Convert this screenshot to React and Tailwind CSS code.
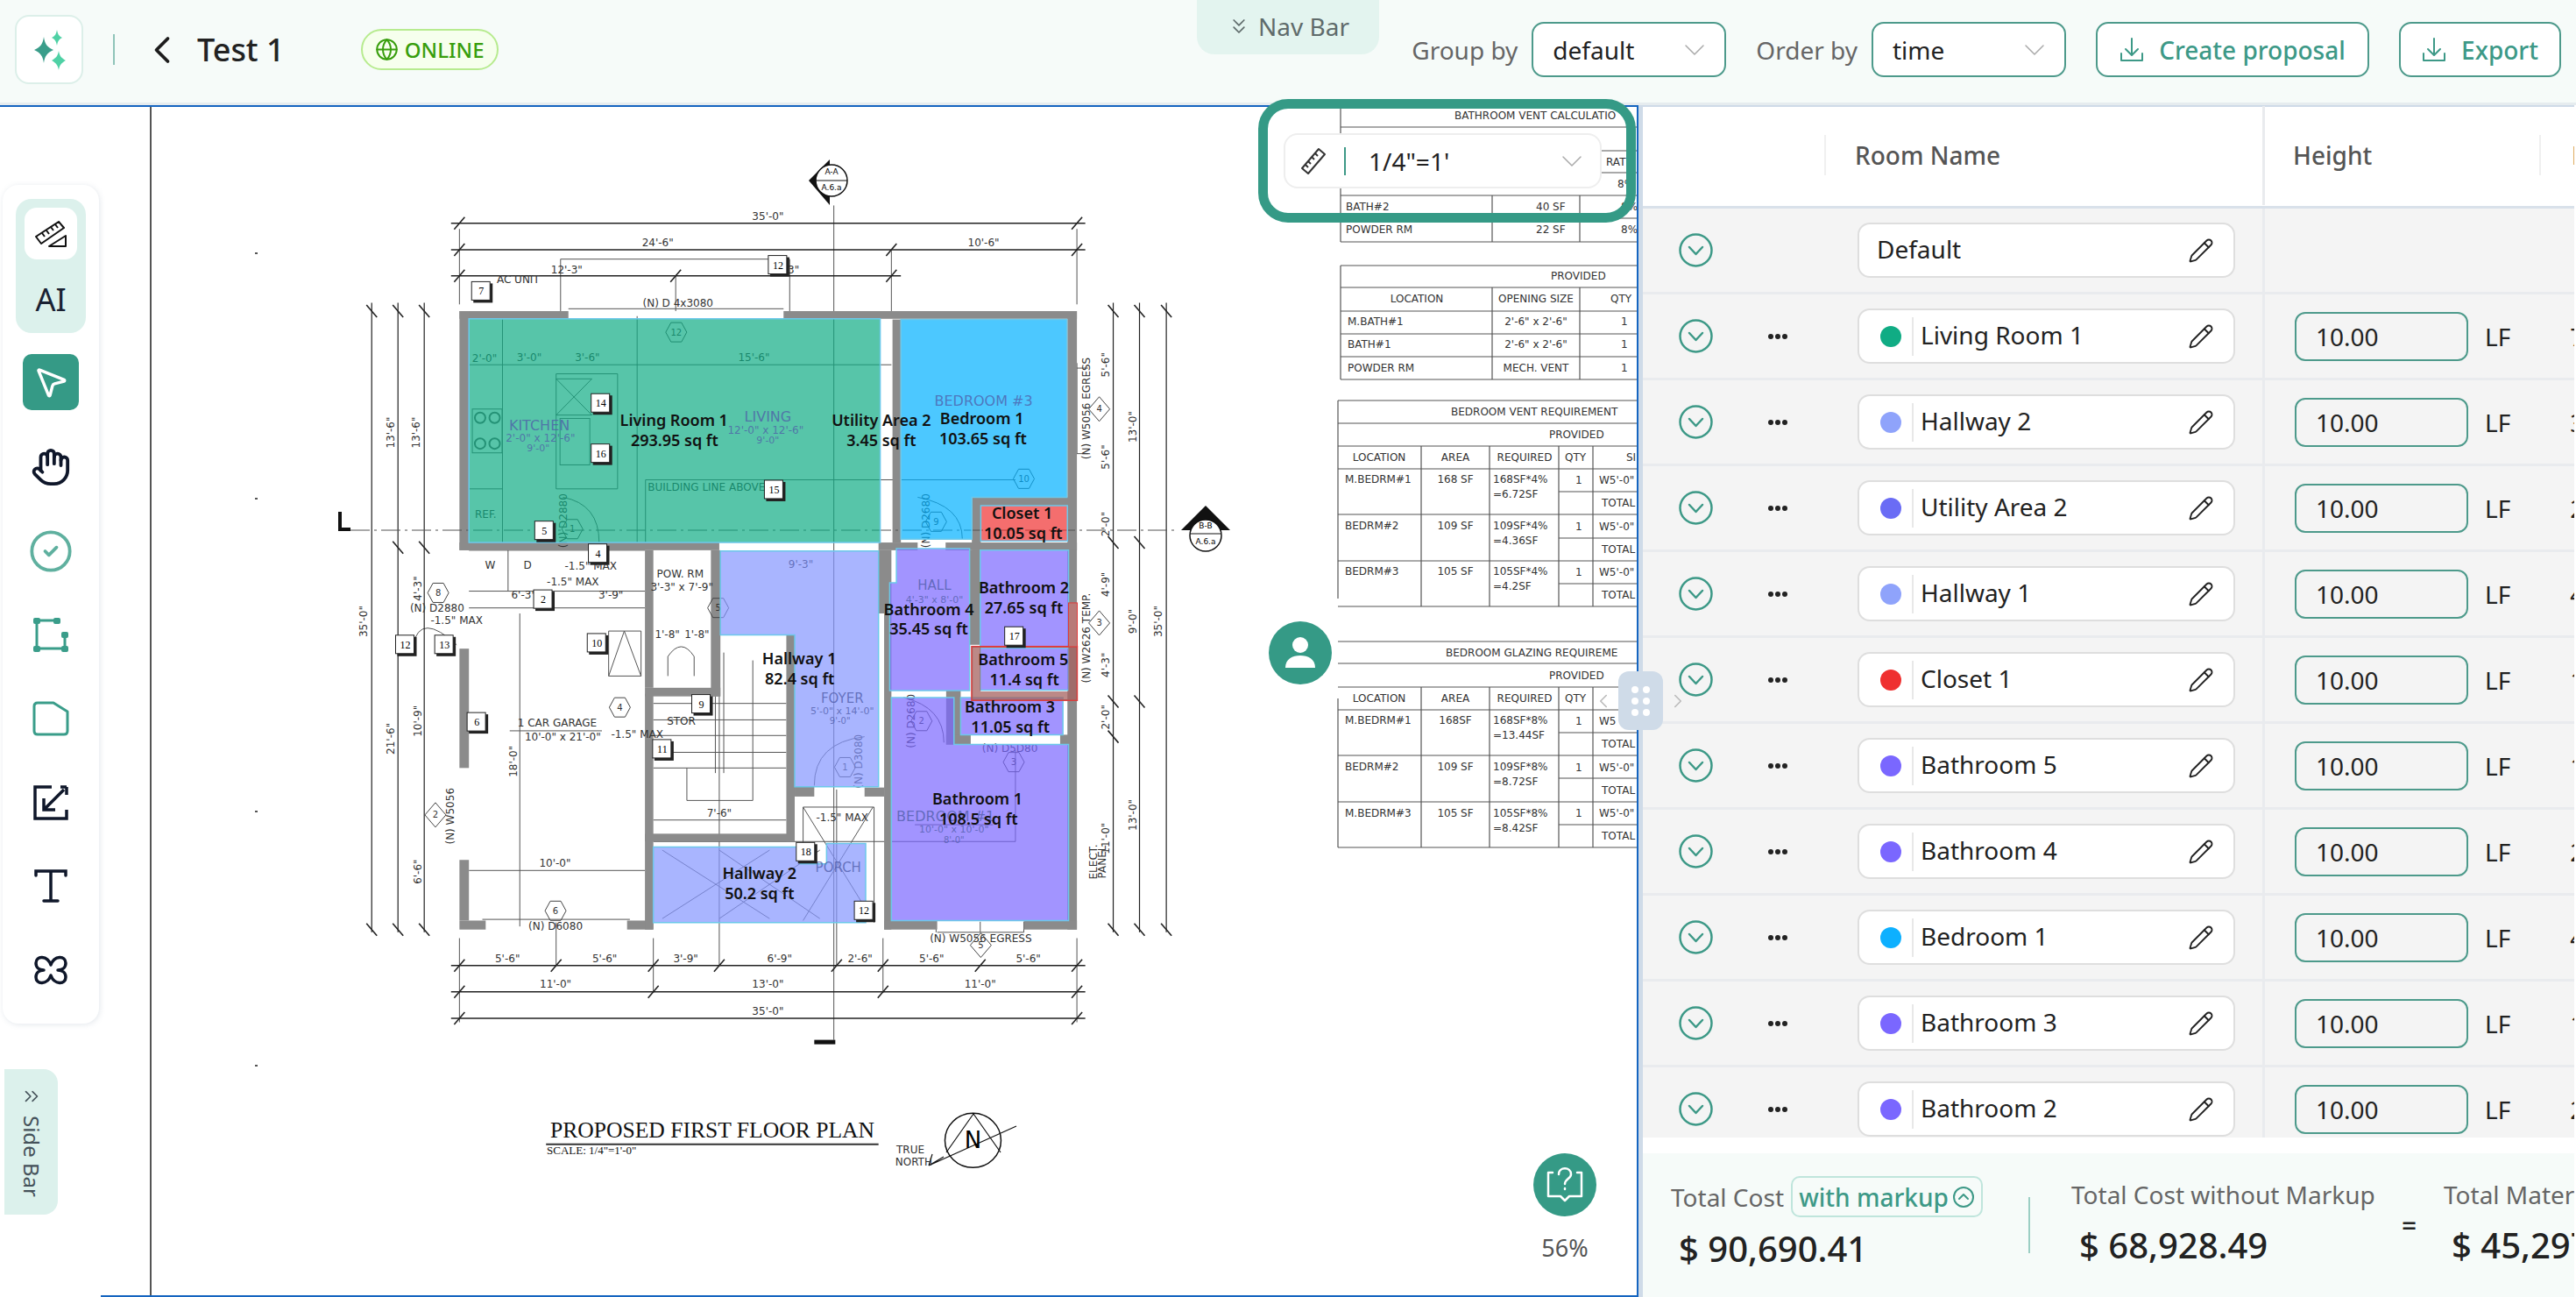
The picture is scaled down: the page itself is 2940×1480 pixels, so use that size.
import { ChevronDown, ChevronLeft, ChevronRight, ChevronsDown, ChevronsRight, Globe, Hand, MousePointer2, CircleCheck, Pencil } from "lucide-react";

// reference zoom coords -> page coords
const X = x => 400 + x / 1.568;
const U = (x, y) => [X(x), 200 + y / 2.613];
const L = (x, y) => [X(x), 700 + y / 2.24];
const pts = a => a.map(p => p.join(",")).join(" ");

const ROOMS = [
    [[U(212, 428), U(948, 428), U(948, 1095), U(212, 1095)], "rgba(16,172,132,.7)"],
    [[U(985, 430), U(1282, 430), U(1282, 960), U(1112, 960), U(1112, 1085), U(985, 1085)], "rgba(0,176,255,.7)"],
    [[U(1128, 985), U(1283, 985), U(1283, 1090), U(1128, 1090)], "rgba(239,48,48,.7)"],
    [[U(662, 1120), U(945, 1120), L(945, 443), L(795, 443), L(795, 55), L(662, 55)], "rgba(132,150,255,.7)"],
    [[U(977, 1113), U(1108, 1113), L(1108, 197), L(965, 197), U(965, 1215), U(977, 1215)], "rgba(122,103,255,.7)"],
    [[U(1127, 1118), U(1285, 1118), U(1285, 1405), U(1127, 1405)], "rgba(122,103,255,.7)"],
    [[U(1127, 1410), U(1285, 1410), U(1285, 1535), U(1127, 1535)], "rgba(122,103,255,.7)"],
    [[L(1092, 215), L(1275, 215), L(1275, 310), L(1092, 310)], "rgba(122,103,255,.7)"],
    [[L(968, 215), L(1080, 215), L(1080, 335), L(1285, 335), L(1285, 785), L(968, 785)], "rgba(122,103,255,.7)"],
    [[L(542, 597), L(805, 597), L(805, 640), L(852, 640), L(852, 588), L(922, 588), L(922, 790), L(542, 790)], "rgba(132,150,255,.7)"],
];

const WALLS = [
    [U(195, 405), U(390, 428)], [U(775, 405), U(1300, 428)], [U(195, 405), U(212, 1118)],
    [U(1283, 405), L(1300, 808)], [U(195, 1095), U(660, 1118)], [U(945, 1095), U(1015, 1118)],
    [U(1065, 1095), U(1300, 1118)], [U(970, 430), U(985, 1095)], [U(1112, 960), U(1285, 985)],
    [U(1112, 960), U(1128, 1118)], [U(945, 1118), L(968, 0)], [L(955, 0), L(968, 808)],
    [L(955, 785), L(1050, 808)], [L(1205, 785), L(1300, 808)], [U(1108, 1118), U(1127, 1400)],
    [L(1066, 197), L(1092, 335)], [L(1066, 310), L(1110, 335)], [L(1270, 310), L(1285, 335)],
    [L(195, 90), L(212, 395)], [L(195, 630), L(212, 785)], [L(195, 785), L(242, 808)],
    [L(495, 785), L(542, 808)], [L(527, 205), L(542, 808)], [U(527, 1118), L(542, 190)],
    [L(527, 190), L(662, 212)], [U(645, 1118), L(662, 212)], [L(527, 563), L(795, 583)],
    [L(780, 55), L(795, 583)], [L(795, 443), L(830, 468)], [L(920, 445), L(955, 468)],
];

const DIMS = [
    [U(180, 143), U(1315, 143), [195, 1300]], [U(180, 222), U(1315, 222), [195, 968, 1300]],
    [U(180, 300), U(985, 300), [195, 582, 968]], [L(180, 900), L(1315, 900), [195, 368, 542, 660, 870, 953, 1127, 1300]],
    [L(180, 967), L(1315, 967), [195, 542, 953, 1300]], [L(180, 1035), L(1315, 1035), [195, 1300]],
];

const THIN = [
    [U(195, 160), U(195, 385)], [U(1300, 160), U(1300, 385)], [U(968, 225), U(968, 405)], [U(582, 300), U(582, 405)],
    [U(865, 90), L(865, 1090)], [L(195, 830), L(195, 1045)], [L(1300, 830), L(1300, 1045)], [L(542, 830), L(542, 970)],
    [L(953, 830), L(953, 970)], [L(368, 790), L(368, 900)], [L(660, 0), L(660, 900)], [L(870, 450), L(870, 900)],
    [U(376, 250), U(376, 405)], [U(376, 250), U(785, 250)], [U(786, 250), U(786, 405)],
    [U(212, 565), U(968, 565)], [U(272, 430), U(272, 1095)], [U(212, 935), U(272, 935)],
    [U(368, 592), U(478, 592)], [U(478, 592), U(478, 935)], [U(368, 935), U(478, 935)], [U(368, 592), U(368, 935)],
    [U(368, 607), U(432, 715)], [U(432, 607), U(368, 715)], [U(368, 607), U(432, 607)], [U(368, 715), U(432, 715)],
    [U(528, 908), U(1190, 908)], [U(528, 908), U(528, 1095)], [U(390, 398), U(775, 398)], [U(513, 420), U(513, 1095)],
    [U(212, 1290), U(527, 1290)], [U(212, 1240), U(527, 1240)], [U(282, 1118), U(282, 1240)], [U(212, 1118), U(527, 1118)],
    [L(303, 0), L(303, 800)], [L(212, 657), L(527, 657)], [L(236, 782), L(500, 782)], [L(285, 300), L(450, 300)],
    [L(542, 230), L(780, 230)], [L(542, 272), L(780, 272)], [L(542, 312), L(780, 312)], [L(542, 355), L(780, 355)], [L(542, 395), L(780, 395)],
    [L(602, 395), L(602, 478)], [L(602, 478), L(720, 478)], [L(720, 120), L(720, 478)], [L(653, 100), L(653, 408)], [L(668, 100), L(668, 408)],
    [L(542, 528), L(780, 528)], [L(810, 495), L(937, 495)], [L(937, 495), L(937, 790)], [L(810, 495), L(810, 590)],
    [L(1048, 788), L(1048, 815)], [L(1205, 788), L(1205, 815)], [L(1127, 788), L(1127, 815)], [L(1050, 815), L(1205, 815)],
    [L(542, 583), L(1190, 583)], [L(1190, 350), L(1190, 583)], [L(1010, 540), L(1150, 540)],
    [L(462, 45), L(520, 45)], [L(462, 160), L(520, 160)], [L(462, 45), L(462, 160)], [L(520, 45), L(520, 160)],
    [L(462, 160), L(490, 45)], [L(520, 160), L(490, 45)], [L(810, 495), L(935, 785)], [L(935, 495), L(810, 785)],
    [L(558, 605), L(750, 780)], [L(750, 605), L(558, 780)], [L(660, 605), L(840, 780)], [L(660, 780), L(840, 605)],
    [U(1300, 560), U(1300, 830)], [U(1290, 575), U(1320, 575)], [U(1290, 830), U(1320, 830)],
];

const VDIMS = [
    [38, [U(38, 405), L(38, 808)]], [85, [U(85, 405), U(85, 1110), L(85, 808)]], [132, [U(132, 405), U(132, 1110), L(132, 808)]],
    [1365, [U(1365, 405), U(1365, 1095), L(1365, 225), L(1365, 315), L(1365, 808)]],
    [1412, [U(1412, 405), U(1412, 1095), L(1412, 225), L(1412, 808)]], [1460, [U(1460, 405), L(1460, 808)]],
];

const THIN_TEXT = [
    ["35'-0\"", U(747, 122)], ["24'-6\"", U(550, 202)], ["10'-6\"", U(1133, 202)], ["12'-3\"", U(387, 283)], ["12'-3\"", U(775, 283)],
    ["AC UNIT", U(300, 312)], ["(N) D 4x3080", U(586, 382)], ["2'-0\"", U(240, 546)], ["3'-0\"", U(320, 544)], ["3'-6\"", U(424, 544)], ["15'-6\"", U(722, 544)],
    ["REF.", U(242, 1012)], ["BUILDING LINE ABOVE", U(637, 929)], ["W", U(250, 1163)], ["D", U(317, 1163)], ["-1.5\" MAX", U(430, 1165)], ["-1.5\" MAX", U(398, 1213)],
    ["POW. RM", U(590, 1190)], ["3'-3\" x 7'-9\"", U(593, 1228)], ["6'-3\"", U(310, 1252)], ["3'-9\"", U(466, 1252)], ["(N) D2880", U(155, 1292)], ["-1.5\" MAX", U(190, 1327)],
    ["1'-8\"", U(567, 1368)], ["1'-8\"", U(620, 1368)], ["(N) D5D80", L(1180, 344)], ["(N) D6080", L(367, 799)], ["(N) W5056 EGRESS", L(1128, 832)],
    ["1 CAR GARAGE", L(370, 280)], ["10'-0\" x 21'-0\"", L(380, 315)], ["STOR", L(592, 276)], ["-1.5\" MAX", L(513, 308)], ["7'-6\"", L(660, 510)], ["-1.5\" MAX", L(880, 523)],
    ["10'-0\"", L(366, 638)], ["5'-6\"", L(281, 882)], ["5'-6\"", L(455, 882)], ["3'-9\"", L(600, 882)], ["6'-9\"", L(768, 882)], ["2'-6\"", L(912, 882)],
    ["5'-6\"", L(1040, 882)], ["5'-6\"", L(1213, 882)], ["11'-0\"", L(367, 948)], ["13'-0\"", L(747, 948)], ["11'-0\"", L(1127, 948)], ["35'-0\"", L(747, 1017)],
];

const ROT_TEXT = [
    ["13'-6\"", U(72, 767)], ["13'-6\"", U(118, 767)], ["35'-0\"", U(24, 1330)], ["4'-3\"", U(120, 1232)], ["21'-6\"", L(72, 320)], ["10'-9\"", L(120, 275)], ["6'-6\"", L(120, 660)],
    ["5'-6\"", U(1352, 565)], ["5'-6\"", U(1352, 840)], ["13'-0\"", U(1400, 750)], ["2'-0\"", U(1352, 1040)], ["4'-9\"", U(1352, 1220)], ["9'-0\"", U(1400, 1330)], ["35'-0\"", U(1445, 1330)],
    ["4'-3\"", U(1352, 1460)], ["2'-0\"", L(1352, 265)], ["13'-0\"", L(1400, 515)], ["11'-0\"", L(1352, 575)], ["(N) W5056 EGRESS", U(1317, 695)], ["(N) W2626 TEMP.", U(1317, 1380)],
    ["(N) W5056", L(178, 518)], ["(N) D2680", U(1030, 1030)], ["(N) D2880", U(381, 1030)], ["(N) D2680", L(1003, 275)], ["(N) D3080", L(910, 378)], ["18'-0\"", L(292, 378)], ["ELECT.", L(1330, 635)], ["PANEL", L(1346, 635)],
];

const BLUE_TEXT = [
    ["KITCHEN", U(338, 745), 16], ["2'-0\" x 12'-6\"", U(340, 783), 12], ["LIVING", U(747, 720), 16], ["12'-0\" x 12'-6\"", U(743, 760), 12], ["9'-0\"", U(747, 790), 11], ["9'-0\"", U(336, 815), 11],
    ["BEDROOM #3", U(1133, 672), 16], ["HALL", U(1045, 1222), 15], ["4'-3\" x 8'-0\"", U(1045, 1266), 11], ["9'-3\"", U(806, 1160), 12],
    ["FOYER", L(880, 217), 15], ["5'-0\" x 14'-0\"", L(880, 250), 11], ["9'-0\"", L(876, 275), 10], ["BEDROOM #1", L(1065, 518), 16], ["10'-0\" x 10'-0\"", L(1080, 553), 11], ["8'-0\"", L(1080, 580), 10], ["PORCH", L(873, 650), 15],
];

const LABELS = [
    ["Living Room 1", U(579, 729)], ["293.95 sq ft", U(580, 788)], ["Utility Area 2", U(950, 729)], ["3.45 sq ft", U(950, 788)],
    ["Bedroom 1", U(1130, 724)], ["103.65 sq ft", U(1132, 784)], ["Closet 1", U(1202, 1005)], ["10.05 sq ft", U(1204, 1065)],
    ["Bathroom 2", U(1205, 1228)], ["27.65 sq ft", U(1205, 1288)], ["Bathroom 4", U(1035, 1293)], ["35.45 sq ft", U(1035, 1352)],
    ["Hallway 1", U(803, 1440)], ["82.4 sq ft", U(804, 1500)], ["Bathroom 5", U(1204, 1442)], ["11.4 sq ft", U(1206, 1502)],
    ["Bathroom 3", L(1180, 238)], ["11.05 sq ft", L(1181, 290)], ["Bathroom 1", L(1122, 472)], ["108.5 sq ft", L(1124, 524)],
    ["Hallway 2", L(732, 662)], ["50.2 sq ft", L(732, 714)],
];

const TAGS = [
    ["7", U(234, 346)], ["12", U(765, 268)], ["4", U(443, 1128)], ["2", U(345, 1265)], ["12", U(98, 1400)], ["13", U(168, 1400)], ["10", L(441, 76)], ["6", L(226, 278)],
    ["9", L(628, 232)], ["11", L(558, 347)], ["18", L(815, 610)], ["14", U(448, 680)], ["16", U(448, 830)], ["15", U(758, 938)], ["5", U(347, 1060)], ["17", U(1188, 1375)], ["12", L(919, 760)],
];
const HEXES = [["12", U(583, 468)], ["10", U(1205, 905)], ["9", U(1048, 1033)], ["8", U(157, 1245)], ["5", U(658, 1290)], ["3", L(1187, 380)], ["2", L(1022, 275)], ["1", L(885, 393)], ["6", L(367, 760)], ["4", L(482, 240)], ["1", U(397, 1055)]];
const DIAMONDS = [["4", U(1340, 697)], ["3", U(1340, 1335)], ["2", L(152, 515)], ["5", L(1128, 848)]];

// door swings: hinge corner, free end, control point
const DOORS = [
    [U(380, 960), U(445, 1095), U(445, 980)], [U(1015, 960), U(1095, 1085), U(1095, 985)], [U(112, 1400), U(190, 1400), U(125, 1300)],
    [L(990, 215), L(1062, 330), L(1062, 240)], [L(920, 315), L(830, 440), L(830, 330)],
];
const BURNERS = [U(232, 723), U(258, 723), U(232, 800), U(258, 800)];

function FloorPlan() {
    return <g>
        <g stroke="#555" strokeWidth="1" fill="none">
            {THIN.map(([a, b], i) => <line key={i} x1={a[0]} y1={a[1]} x2={b[0]} y2={b[1]} />)}
            {DOORS.map(([a, b, c], i) => <path key={i} d={`M${a[0]} ${a[1]}Q${c[0]} ${c[1]} ${b[0]} ${b[1]}`} />)}
            {BURNERS.map((p, i) => <circle key={i} cx={p[0]} cy={p[1]} r="6" strokeWidth="2" />)}
            <rect x={X(218)} y={U(0, 697)[1]} width="34" height="50" />
            <rect x={X(375)} y={U(0, 725)[1]} width="34" height="53" />
            <path d={`M${X(568)} ${L(0, 160)[1]}V${L(0, 110)[1]}Q${X(592)} ${L(0, 60)[1]} ${X(615)} ${L(0, 110)[1]}V${L(0, 160)[1]}`} />
        </g>
        <g fill="#8b8b8b">
            {WALLS.map(([a, b], i) => <rect key={i} x={a[0]} y={a[1]} width={b[0] - a[0]} height={b[1] - a[1]} />)}
        </g>
        <g stroke="#222" strokeWidth="1.6">
            {DIMS.map(([a, b, ticks], i) => <g key={i}>
                <line x1={a[0]} y1={a[1]} x2={b[0]} y2={b[1]} />
                {ticks.map(t => <line key={t} x1={X(t) - 6} y1={a[1] + 7} x2={X(t) + 6} y2={a[1] - 7} />)}
            </g>)}
            {VDIMS.map(([x, ticks], i) => <g key={i}>
                <line x1={X(x)} y1={U(0, 380)[1]} x2={X(x)} y2={L(0, 815)[1]} strokeWidth="1.2" />
                {ticks.map((t, j) => <line key={j} x1={t[0] - 6} y1={t[1] - 7} x2={t[0] + 6} y2={t[1] + 7} />)}
            </g>)}
        </g>
        <line x1="400" y1="605" x2="1345" y2="605" stroke="#555" strokeWidth="1" strokeDasharray="22 5 3 5" />
        <g className="font-['DejaVu_Sans']" fill="#333" fontSize="12" textAnchor="middle" dominantBaseline="central">
            {THIN_TEXT.map(([t, p], i) => <text key={i} x={p[0]} y={p[1]}>{t}</text>)}
            {ROT_TEXT.map(([t, p], i) => <text key={i} x={p[0]} y={p[1]} transform={`rotate(-90 ${p[0]} ${p[1]})`}>{t}</text>)}
            {HEXES.map(([t, p], i) => <g key={i}>
                <polygon points={pts([[p[0] - 12, p[1]], [p[0] - 6, p[1] - 11], [p[0] + 6, p[1] - 11], [p[0] + 12, p[1]], [p[0] + 6, p[1] + 11], [p[0] - 6, p[1] + 11]])} fill="none" stroke="#444" />
                <text x={p[0]} y={p[1]} fontSize="10">{t}</text>
            </g>)}
            {DIAMONDS.map(([t, p], i) => <g key={i}>
                <polygon points={pts([[p[0] - 12, p[1]], [p[0], p[1] - 14], [p[0] + 12, p[1]], [p[0], p[1] + 14]])} fill="none" stroke="#444" />
                <text x={p[0]} y={p[1]} fontSize="10">{t}</text>
            </g>)}
        </g>
        {ROOMS.map(([p, c], i) => <polygon key={i} points={pts(p)} fill={c} stroke="#6cc8ea" strokeWidth="1.5" />)}
        <rect x={X(1112)} y={L(0, 85)[1]} width="120" height="61" fill="none" stroke="#e03a3a" strokeWidth="2" />
        <path d={`M${X(1112)} ${L(0, 85)[1]}v61h120v-61h-10v51h-100v-51z`} fill="#a5615f" fillOpacity=".75" />
        <rect x={X(1285)} y={U(0, 1275)[1]} width="10" height="50" fill="#b87a78" stroke="#e03a3a" />
        <g className="font-['DejaVu_Sans']" fill="#4e5ba8" fillOpacity=".75" textAnchor="middle" dominantBaseline="central">
            {BLUE_TEXT.map(([t, p, s], i) => <text key={i} x={p[0]} y={p[1]} fontSize={s}>{t}</text>)}
        </g>
        {TAGS.map(([t, p], i) => <g key={i} className="font-['Liberation_Serif']">
            <rect x={p[0] - 9} y={p[1] - 9} width="22" height="22" fill="#222" />
            <rect x={p[0] - 11} y={p[1] - 11} width="21" height="21" fill="#fff" stroke="#222" />
            <text x={p[0]} y={p[1]} fontSize="12" textAnchor="middle" dominantBaseline="central">{t}</text>
        </g>)}
        <g className="font-['Noto_Sans'] font-semibold" fill="#111" fontSize="18" textAnchor="middle" dominantBaseline="central">
            {LABELS.map(([t, p], i) => <text key={i} x={p[0]} y={p[1]}>{t}</text>)}
        </g>
        {/* section marks */}
        <path d="M923 206L947 182V234z" fill="#111" />
        <circle cx="949" cy="206" r="18" fill="#fff" stroke="#111" strokeWidth="1.5" />
        <path d="M931 206H967" stroke="#111" />
        <text x="949" y="199" fontSize="9" textAnchor="middle" className="font-['DejaVu_Sans']">A-A</text>
        <text x="949" y="217" fontSize="9" textAnchor="middle" className="font-['DejaVu_Sans']">A.6.a</text>
        <path d="M1348 605L1376 577L1404 605z" fill="#111" />
        <circle cx="1376" cy="611" r="18" fill="#fff" stroke="#111" strokeWidth="1.5" />
        <path d="M1358 609H1394" stroke="#111" />
        <text x="1376" y="603" fontSize="9" textAnchor="middle" className="font-['DejaVu_Sans']">B-B</text>
        <text x="1376" y="621" fontSize="9" textAnchor="middle" className="font-['DejaVu_Sans']">A.6.a</text>
        <path d="M388 584V604H400" stroke="#111" strokeWidth="4" fill="none" />
        <rect x={X(830)} y={L(0, 1090)[1]} width="24" height="5" fill="#111" />
        {[[291, 288], [291, 568], [291, 925], [291, 1215]].map(([x, y]) => <rect key={y} x={x} y={y} width="3" height="2" fill="#555" />)}
        {/* title block */}
        <g className="font-['Liberation_Serif']" fill="#111" dominantBaseline="central">
            <text x="813" y="1289" fontSize="25.6" textAnchor="middle">PROPOSED FIRST FLOOR PLAN</text>
            <text x="624" y="1312" fontSize="13">SCALE: 1/4"=1'-0"</text>
        </g>
        <line x1={X(350)} y1={L(0, 1357)[1]} x2={X(945)} y2={L(0, 1357)[1]} stroke="#333" strokeWidth="2" />
        <ellipse cx={X(1114)} cy={L(0, 1347)[1]} rx="32" ry="31" fill="none" stroke="#111" strokeWidth="1.5" />
        <path d="M1111 1271L1080 1315M1111 1271L1142 1315M1060 1330L1160 1285M1060 1330L1077 1320M1060 1330L1064 1317" stroke="#111" strokeWidth="1.2" fill="none" />
        <text x={X(1114)} y={L(0, 1347)[1]} fontSize="26" textAnchor="middle" dominantBaseline="central" className="font-['DejaVu_Sans']">N</text>
        <g className="font-['DejaVu_Sans']" fill="#333" fontSize="12" textAnchor="middle" dominantBaseline="central">
            <text x={X(1002)} y={L(0, 1370)[1]}>TRUE</text>
            <text x={X(1008)} y={L(0, 1403)[1]}>NORTH</text>
        </g>
    </g>
}

const SHEET_LINES = [
    [1530, 122, 1530, 276], [1530, 145, 1868, 145], [1530, 223, 1868, 223], [1530, 249, 1868, 249], [1530, 276, 1868, 276], [1703, 223, 1703, 276], [1803, 223, 1803, 276], [1828, 172, 1868, 172], [1828, 197, 1868, 197],
    [1530, 303, 1868, 303], [1530, 303, 1530, 433], [1530, 328, 1868, 328], [1530, 355, 1868, 355], [1530, 381, 1868, 381], [1530, 407, 1868, 407], [1530, 433, 1868, 433], [1703, 328, 1703, 433], [1803, 328, 1803, 433],
    [1527, 457, 1868, 457], [1527, 457, 1527, 683], [1527, 483, 1868, 483], [1527, 509, 1868, 509], [1527, 535, 1868, 535], [1527, 587, 1868, 587], [1527, 640, 1868, 640], [1527, 692, 1868, 692],
    [1622, 509, 1622, 692], [1700, 509, 1700, 692], [1779, 509, 1779, 692], [1818, 509, 1818, 692], [1779, 561, 1868, 561], [1779, 614, 1868, 614], [1779, 666, 1868, 666],
    [1527, 732, 1868, 732], [1527, 757, 1868, 757], [1527, 784, 1868, 784], [1527, 810, 1868, 810], [1527, 862, 1868, 862], [1527, 915, 1868, 915], [1527, 967, 1868, 967], [1527, 797, 1527, 967],
    [1622, 784, 1622, 967], [1700, 784, 1700, 967], [1779, 784, 1779, 967], [1818, 784, 1818, 967], [1779, 836, 1868, 836], [1779, 888, 1868, 888], [1779, 941, 1868, 941],
];

const SHEET_TEXT = [
    ["BATHROOM VENT CALCULATIO", 1660, 132], ["RATE", 1833, 185], ["8%", 1846, 210], ["BATH#2", 1536, 236], ["40 SF", 1753, 236], ["8%", 1850, 236], ["POWDER RM", 1536, 262], ["22 SF", 1753, 262], ["8%", 1850, 262],
    ["PROVIDED", 1770, 315], ["LOCATION", 1617, 341, "m"], ["OPENING SIZE", 1753, 341, "m"], ["QTY", 1850, 341, "m"], ["M.BATH#1", 1538, 367], ["2'-6\" x 2'-6\"", 1753, 367, "m"], ["1", 1850, 367], ["BATH#1", 1538, 393], ["2'-6\" x 2'-6\"", 1753, 393, "m"], ["1", 1850, 393], ["POWDER RM", 1538, 420], ["MECH. VENT", 1753, 420, "m"], ["1", 1850, 420],
    ["BEDROOM VENT REQUIREMENT", 1656, 470], ["PROVIDED", 1768, 496], ["LOCATION", 1574, 522, "m"], ["AREA", 1661, 522, "m"], ["REQUIRED", 1740, 522, "m"], ["QTY", 1798, 522, "m"], ["SI", 1856, 522], ["M.BEDRM#1", 1535, 547], ["168 SF", 1661, 547, "m"], ["168SF*4%", 1704, 547], ["=6.72SF", 1704, 564], ["1", 1798, 548], ["W5'-0\"", 1825, 548], ["TOTAL", 1828, 574],
    ["BEDRM#2", 1535, 600], ["109 SF", 1661, 600, "m"], ["109SF*4%", 1704, 600], ["=4.36SF", 1704, 617], ["1", 1798, 601], ["W5'-0\"", 1825, 601], ["TOTAL", 1828, 627], ["BEDRM#3", 1535, 652], ["105 SF", 1661, 652, "m"], ["105SF*4%", 1704, 652], ["=4.2SF", 1704, 669], ["1", 1798, 653], ["W5'-0\"", 1825, 653], ["TOTAL", 1828, 679],
    ["BEDROOM GLAZING REQUIREME", 1650, 745], ["PROVIDED", 1768, 771], ["LOCATION", 1574, 797, "m"], ["AREA", 1661, 797, "m"], ["REQUIRED", 1740, 797, "m"], ["QTY", 1798, 797, "m"], ["M.BEDRM#1", 1535, 822], ["168SF", 1661, 822, "m"], ["168SF*8%", 1704, 822], ["=13.44SF", 1704, 839], ["1", 1798, 823], ["W5", 1825, 823], ["TOTAL", 1828, 849],
    ["BEDRM#2", 1535, 875], ["109 SF", 1661, 875, "m"], ["109SF*8%", 1704, 875], ["=8.72SF", 1704, 892], ["1", 1798, 876], ["W5'-0\"", 1825, 876], ["TOTAL", 1828, 902], ["M.BEDRM#3", 1535, 928], ["105 SF", 1661, 928, "m"], ["105SF*8%", 1704, 928], ["=8.42SF", 1704, 945], ["1", 1798, 928], ["W5'-0\"", 1825, 928], ["TOTAL", 1828, 954],
];

function Sheet() {
    return <g>
        <g stroke="#555" strokeWidth="1.2">
            {SHEET_LINES.map(([a, b, c, d], i) => <line key={i} x1={a} y1={b} x2={c} y2={d} />)}
        </g>
        <g className="font-['DejaVu_Sans']" fill="#333" fontSize="12" dominantBaseline="central">
            {SHEET_TEXT.map(([t, x, y, m], i) => <text key={i} x={x} y={y} textAnchor={m ? "middle" : "start"}>{t}</text>)}
        </g>
    </g>
}

function Logo() {
    return <svg width="44" height="46" viewBox="0 0 44 46">
        <path d="M16 8C17 16 20 20 27 23C20 26 17 30 16 38C15 30 12 26 5 23C12 20 15 16 16 8Z" fill="#3a9d8a" />
        <path d="M31 0C32 5 33 7 37 9C33 11 32 13 31 18C30 13 29 11 25 9C29 7 30 5 31 0Z" fill="#4fd1a5" />
        <path d="M33 24C34 30 36 32 41 35C36 38 34 40 33 46C32 40 30 38 25 35C30 32 32 30 33 24Z" fill="#4fd1a5" />
    </svg>
}

function Tray({ className }) {
    return <svg className={className} width="28" height="30" viewBox="0 0 28 30" fill="none" stroke="currentColor" strokeWidth="2" strokeLinecap="round" strokeLinejoin="round">
        <path d="M14 2V20M7 14L14 21L21 14M2 19V27H26V19" />
    </svg>
}

function RulerIcon({ className }) {
    return <svg className={className} width="30" height="32" viewBox="0 0 30 32" fill="none" stroke="currentColor" strokeWidth="2" strokeLinejoin="round">
        <path d="M21 2L28 8L9 30L2 24Z" />
        <path d="M17 7L20 10M13 11L16 14M9 16L12 19M6 20L9 23" />
    </svg>
}

function Select({ value }) {
    return <div className="w-[222px] h-[63px] flex items-center justify-between pl-[22px] pr-[14px] bg-white border-2 border-[#4d9a8b] rounded-[14px] text-[28px] text-[#222]">
        {value}
        <ChevronDown size={40} strokeWidth={0.9} className="text-[#aaa]" />
    </div>
}

function TopBar() {
    return <header className="relative h-[120px] pb-[4px] px-[17px] flex items-center bg-[#f6fbf9] border-b-[3px] border-[#e6ecef]">
        <div className="w-[78px] h-[79px] flex items-center justify-center bg-white border-2 border-[#dcefe9] rounded-[16px]"><Logo /></div>
        <div className="ml-[34px] w-[2px] h-[35px] bg-[#8fc4b9]"></div>
        <ChevronLeft size={52} strokeWidth={1.75} className="ml-[28px] text-[#1c1c1c]" />
        <h1 className="ml-[14px] text-[36px] font-medium text-[#222]">Test 1</h1>
        <div className="ml-[87px] w-[157px] h-[47px] flex items-center justify-center gap-[7px] bg-[#f6ffed] border-2 border-[#b7eb8f] rounded-full text-[24px] font-medium text-[#389e0d]">
            <Globe size={27} strokeWidth={1.75} />ONLINE
        </div>
        <div className="absolute left-[1366px] top-0 w-[208px] h-[62px] pb-[3px] flex items-center justify-center gap-[8px] bg-[#e3f4ef] rounded-b-[20px] text-[28px] text-[#5f6b6b]">
            <ChevronsDown size={28} strokeWidth={1.5} />Nav Bar
        </div>
        <div className="ml-auto flex items-center">
            <span className="text-[28px] text-[#666] mr-[16px]">Group by</span>
            <Select value="default" />
            <span className="text-[28px] text-[#666] ml-[34px] mr-[16px]">Order by</span>
            <Select value="time" />
            <button className="ml-[34px] w-[312px] h-[63px] flex items-center justify-center gap-[17px] bg-white border-2 border-[#4d9a8b] rounded-[14px] text-[28px] font-medium text-[#3d9987]"><Tray />Create proposal</button>
            <button className="ml-[34px] w-[185px] h-[63px] flex items-center justify-center gap-[17px] bg-white border-2 border-[#4d9a8b] rounded-[14px] text-[28px] font-medium text-[#3d9987]"><Tray />Export</button>
        </div>
    </header>
}

function Tool({ children }) {
    return <div className="h-[95.7px] flex items-center justify-center">{children}</div>
}

function SideTools() {
    return <div className="absolute left-[3px] top-[89px] w-[110px] h-[957px] flex flex-col items-center bg-white rounded-[18px] shadow-[1px_1px_6px_rgba(100,120,150,.18)]">
        <div className="mt-[16px] w-[80px] h-[153px] flex flex-col items-center bg-[#dcf1ec] rounded-[18px]">
            <div className="mt-[10px] w-[60px] h-[59px] flex items-center justify-center bg-white rounded-[14px]">
                <svg width="38" height="34" viewBox="0 0 38 34" fill="none" stroke="#111" strokeWidth="2" strokeLinejoin="round">
                    <path d="M2 20L28 3L34 10L8 28Z" />
                    <path d="M9 16L12 20M14 13L17 17M19 9L22 13M24 6L27 10" />
                    <path d="M17 31H36V19Z" />
                </svg>
            </div>
            <span className="mt-[28px] text-[36px] leading-none text-[#1a2233]">AI</span>
        </div>
        <div className="mt-[24px] w-[64px] h-[64px] flex items-center justify-center bg-[#359a86] rounded-[10px]">
            <MousePointer2 size={42} strokeWidth={2} className="text-white" />
        </div>
        <div className="mt-[17px]">
            <Tool><Hand size={46} strokeWidth={2} className="text-[#0f172a]" /></Tool>
            <Tool><CircleCheck size={52} strokeWidth={1.75} className="text-[#5fb09f]" /></Tool>
            <Tool>
                <svg width="42" height="40" viewBox="0 0 42 40" fill="none" stroke="#3a9d8a" strokeWidth="3">
                    <path d="M5 4H26M5 4V36H37V20" />
                    <g fill="#3a9d8a" stroke="none">
                        <rect x="1" y="1" width="8" height="7" rx="2" /><rect x="24" y="1" width="8" height="7" rx="2" />
                        <rect x="33" y="17" width="8" height="7" rx="2" /><rect x="1" y="33" width="8" height="7" rx="2" /><rect x="33" y="33" width="8" height="7" rx="2" />
                    </g>
                </svg>
            </Tool>
            <Tool>
                <svg width="42" height="40" viewBox="0 0 42 40" fill="none" stroke="#3a9d8a" strokeWidth="3" strokeLinejoin="round">
                    <path d="M6 2H24L40 12V34Q40 38 36 38H6Q2 38 2 34V6Q2 2 6 2Z" />
                </svg>
            </Tool>
            <Tool>
                <svg width="42" height="42" viewBox="0 0 42 42" fill="none" stroke="#0f172a" strokeWidth="3.5">
                    <path d="M22 3H3V39H39V29M39 3V12M32 3H39" />
                    <path d="M36 6L13 29M13 16V29H26" />
                </svg>
            </Tool>
            <Tool>
                <svg width="38" height="40" viewBox="0 0 38 40" fill="none" stroke="#0f172a" strokeWidth="3.5" strokeLinecap="round">
                    <path d="M2 8V3H36V8M19 3V37M11 37H27" />
                </svg>
            </Tool>
            <Tool>
                <svg width="40" height="40" viewBox="0 0 40 40" fill="none" stroke="#0f172a" strokeWidth="3.5" strokeLinejoin="round">
                    <path d="M20 14C16 3 3 3 3 12C3 17 7 20 12 20C7 20 3 23 3 28C3 37 16 37 20 26C24 37 37 37 37 28C37 23 33 20 28 20C33 20 37 17 37 12C37 3 24 3 20 14Z" />
                </svg>
            </Tool>
        </div>
    </div>
}

function Canvas() {
    return <section className="relative w-[1870px] bg-white border-t-2 border-r-2 border-[#1565c0]">
        <div className="absolute left-[171px] top-0 bottom-0 w-[2px] bg-[#555]"></div>
        <div className="absolute left-[115px] right-0 bottom-0 h-[2px] bg-[#1565c0]"></div>
        <svg className="absolute left-0 top-0" width="1868" height="1358" viewBox="0 122 1868 1358">
            <FloorPlan />
            <Sheet />
        </svg>
        <SideTools />
        <div className="absolute left-[5px] top-[1098px] w-[61px] h-[166px] flex flex-col items-center pt-[18px] gap-[9px] bg-[#dcf1ec] rounded-r-[16px] text-[24px] text-[#45525a]">
            <ChevronsRight size={26} strokeWidth={1.5} />
            <span className="[writing-mode:vertical-rl] leading-none">Side Bar</span>
        </div>
        <div className="absolute left-[1436px] top-[-9px] w-[431px] h-[141px] border-[11px] border-[#359a86] rounded-[34px]"></div>
        <div className="absolute left-[1465px] top-[30px] w-[363px] h-[63px] flex items-center bg-white border-2 border-[#eee] rounded-[16px] pl-[17px] pr-[12px] text-[28px] text-[#222]">
            <RulerIcon className="text-[#333]" />
            <div className="ml-[20px] w-[2px] h-[32px] bg-[#3d9987]"></div>
            <span className="ml-[26px]">1/4"=1'</span>
            <ChevronDown size={40} strokeWidth={0.9} className="ml-auto text-[#aaa]" />
        </div>
        <div className="absolute left-[1448px] top-[587px] w-[72px] h-[72px] flex items-center justify-center bg-[#359a86] rounded-full">
            <svg width="36" height="38" viewBox="0 0 36 38" fill="#fff"><circle cx="18" cy="10" r="9" /><path d="M1 36C1 26 9 22 18 22C27 22 35 26 35 36Z" /></svg>
        </div>
        <div className="absolute left-[1750px] top-[1194px] w-[72px] h-[72px] flex items-center justify-center bg-[#359a86] rounded-full">
            <svg width="44" height="44" viewBox="0 0 44 44" fill="none" stroke="#fff" strokeWidth="2.5" strokeLinejoin="round" strokeLinecap="round">
                <path d="M8 8H3V35H17L22 40L27 35H41V8H36" />
                <path d="M15 10C15 1 29 1 29 10C29 15 22 15 22 21M22 26V27" />
            </svg>
        </div>
        <div className="absolute left-[1750px] top-[1288px] w-[72px] text-center text-[27px] leading-none text-[#555]">56%</div>
        <ChevronLeft size={26} strokeWidth={1.5} className="absolute left-[1817px] top-[665px] text-[#bbb] z-20" />
        <div className="absolute left-[1847px] top-[644px] w-[51px] h-[67px] grid grid-cols-[8px_8px] gap-x-[5px] gap-y-[5px] content-center justify-center bg-[#cfdbe8] rounded-[12px] z-20">
            {new Array(6).fill(0).map((_, i) => <div key={i} className="w-[8px] h-[8px] bg-white rounded-full"></div>)}
        </div>
        <ChevronRight size={26} strokeWidth={1.5} className="absolute left-[1902px] top-[665px] text-[#bbb] z-20" />
    </section>
}

const ROWS = [
    ["Living Room 1", "#10ac84", "7"], ["Hallway 2", "#8fa3fb", "3"], ["Utility Area 2", "#6a6cf5", "2"], ["Hallway 1", "#8fa3fb", "4"], ["Closet 1", "#ef3030", "1"],
    ["Bathroom 5", "#7a67ff", "1"], ["Bathroom 4", "#7a67ff", "2"], ["Bedroom 1", "#0db0ff", "4"], ["Bathroom 3", "#7a67ff", "1"], ["Bathroom 2", "#7a67ff", "2"],
];

function Expand() {
    return <svg width="39" height="39" viewBox="0 0 39 39" fill="none" stroke="#3d9987" strokeWidth="2.5" strokeLinecap="round" strokeLinejoin="round">
        <circle cx="19.5" cy="19.5" r="18" /><path d="M12 16L19.5 24L27 16" />
    </svg>
}

function Row({ name, color, qty }) {
    return <div className="flex h-[98px] shrink-0 border-b-[3px] border-[#e9ebee] bg-[#f4f4f4]">
        <div className="w-[710px] shrink-0 flex items-center pl-[41px] border-r-[3px] border-[#e9ebee]">
            <Expand />
            {color
                ? <svg className="ml-[63px]" width="22" height="6" viewBox="0 0 22 6" fill="#222"><circle cx="3" cy="3" r="3" /><circle cx="11" cy="3" r="3" /><circle cx="19" cy="3" r="3" /></svg>
                : <div className="ml-[63px] w-[22px]"></div>}
            <div className="ml-[80px] w-[431px] h-[63px] flex items-center bg-white border-2 border-[#dedede] rounded-[14px] text-[28px] text-[#222]">
                {color
                    ? <>
                        <div className="ml-[24px] w-[24px] h-[24px] rounded-full" style={{ backgroundColor: color }}></div>
                        <div className="ml-[12px] w-[2px] h-[44px] bg-[#e8e8e8]"></div>
                        <span className="ml-[8px] pb-[3px]">{name}</span>
                    </>
                    : <span className="ml-[20px] pb-[3px]">{name}</span>}
                <Pencil size={30} strokeWidth={1.5} className="ml-auto mr-[22px] text-[#222]" />
            </div>
        </div>
        {color && <div className="flex items-center pl-[34px]">
            <div className="w-[198px] h-[56px] shrink-0 flex items-center pl-[22px] border-2 border-[#4d9a8b] rounded-[12px] text-[28px] text-[#222]">10.00</div>
            <span className="ml-[19px] text-[28px] text-[#222]">LF</span>
            <span className="ml-[68px] text-[28px] text-[#222]">{qty}</span>
        </div>}
    </div>
}

function Footer() {
    return <div className="h-[164px] mt-[18px] flex bg-[#f6fbf9] text-[28px] whitespace-nowrap">
        <div className="ml-[32px] pt-[26px] w-[358px] shrink-0">
            <div className="flex items-center gap-[8px]">
                <span className="text-[#666]">Total Cost</span>
                <div className="w-[219px] h-[47px] flex items-center justify-center gap-[4px] border-2 border-[#bfe5dc] rounded-[10px] font-medium text-[#3d9987]">
                    with markup
                    <svg width="26" height="26" viewBox="0 0 26 26" fill="none" stroke="#3d9987" strokeWidth="2" strokeLinecap="round" strokeLinejoin="round"><circle cx="13" cy="13" r="11" /><path d="M8 15L13 10L18 15" /></svg>
                </div>
            </div>
            <div className="ml-[9px] mt-[16px] text-[40px] leading-[40px] font-medium text-[#222]">$ 90,690.41</div>
        </div>
        <div className="ml-[50px] mt-[50px] w-[2px] h-[64px] bg-[#9ccfc4] shrink-0"></div>
        <div className="ml-[47px] pt-[28px] w-[344px] shrink-0">
            <div className="leading-[38px] text-[#666]">Total Cost without Markup</div>
            <div className="ml-[9px] mt-[19px] text-[40px] leading-[40px] font-medium text-[#222]">$ 68,928.49</div>
        </div>
        <div className="ml-[33px] mt-[64px] w-[14px] shrink-0 text-[30px] leading-[38px] font-medium text-[#222]">=</div>
        <div className="ml-[34px] pt-[28px]">
            <div className="leading-[38px] text-[#666]">Total Material Cost</div>
            <div className="ml-[9px] mt-[19px] text-[40px] leading-[40px] font-medium text-[#222]">$ 45,297.12</div>
        </div>
    </div>
}

function Panel() {
    return <section className="w-[1063px] flex flex-col overflow-hidden bg-white">
        <div className="h-[118px] pb-[3px] shrink-0 flex items-center border-t-2 border-b-[3px] border-t-[#cfdbe8] border-b-[#d9e1ea] text-[28px] font-medium text-[#555]">
            <div className="w-[209px] h-[46px] shrink-0 border-r-2 border-[#f0f0f0]"></div>
            <div className="w-[501px] h-[113px] shrink-0 flex items-center pl-[33px] border-r-[3px] border-[#e9ebee]">Room Name</div>
            <div className="w-[315px] h-[46px] shrink-0 pl-[32px] border-r-2 border-[#f0f0f0] leading-[46px]">Height</div>
            <div className="ml-[35px] text-[#333]">L</div>
        </div>
        <div className="h-[1060px] shrink-0 overflow-hidden">
            <Row name="Default" />
            {ROWS.map(([name, color, qty]) => <Row key={name} name={name} color={color} qty={qty} />)}
        </div>
        <Footer />
    </section>
}

export default function App() {
    return <div className="w-[2940px] h-[1480px] overflow-hidden bg-white font-['Noto_Sans'] antialiased">
        <TopBar />
        <div className="h-[1360px] flex">
            <Canvas />
            <div className="w-[5px] shrink-0 bg-[#cfdbe8]"></div>
            <Panel />
        </div>
    </div>
}
